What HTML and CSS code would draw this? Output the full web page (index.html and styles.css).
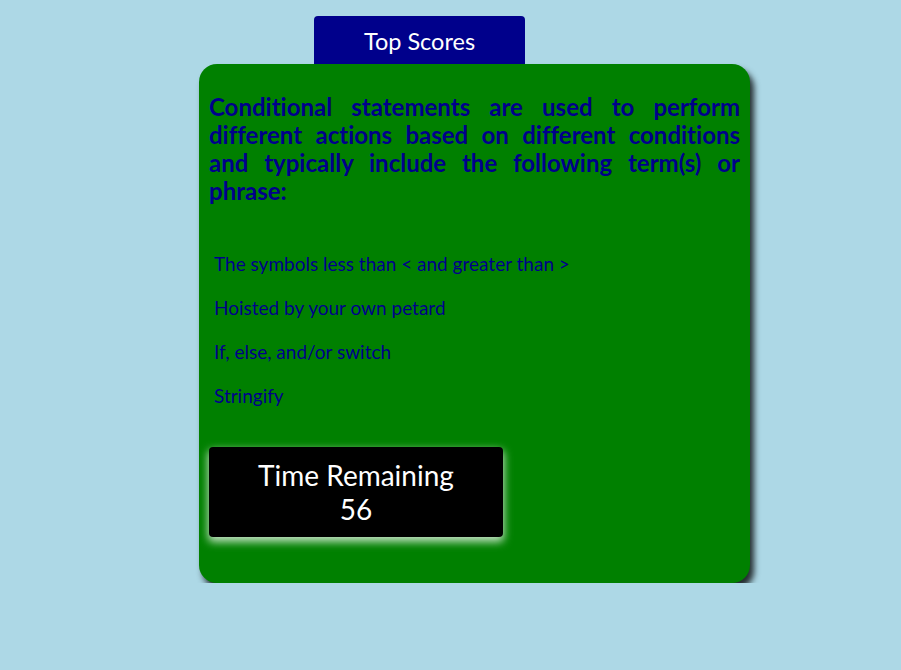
FILE: index.html
```html
<!DOCTYPE html>
<html>
<head>
<meta charset="utf-8">
<link rel="stylesheet" href="styles.css">
</head>
<body>
<div class="page">
  <div class="top-btn">Top Scores</div>
  <div class="card">
    <h2 class="question">Conditional statements are used to perform different actions based on different conditions and typically include the following term(s) or phrase:</h2>
    <div class="answers">
      <div class="answer">The symbols less than &lt; and greater than &gt;</div>
      <div class="answer">Hoisted by your own petard</div>
      <div class="answer">If, else, and/or switch</div>
      <div class="answer">Stringify</div>
    </div>
    <div class="timer">Time Remaining<br>56</div>
  </div>
</div>
</body>
</html>
```
FILE: styles.css
```css
html, body {
  margin: 0;
  padding: 0;
  background: #add8e6;
  font-family: "Lato", "Open Sans", sans-serif;
  font-variant-ligatures: no-common-ligatures;
}
.page {
  padding-top: 16px;
  display: flex;
  flex-direction: column;
  align-items: flex-start;
}
.top-btn {
  margin-left: 314px;
  width: 211px;
  height: 48px;
  box-sizing: border-box;
  background: #00008b;
  color: #fff;
  border-radius: 4px 4px 0 0;
  font-size: 23.5px;
  display: flex;
  align-items: center;
  justify-content: center;
  padding-top: 2px;
}
.card {
  margin-left: 199px;
  width: 551px;
  height: 519px;
  box-sizing: border-box;
  background: #008000;
  border-radius: 18px;
  box-shadow: 4px 6px 6px rgba(0, 0, 0, 0.8);
  padding: 29px 10px 0 10px;
}
.question {
  margin: 0;
  color: #00008b;
  font-size: 24px;
  line-height: 28px;
  font-weight: 700;
  text-align: justify;
}
.answers {
  margin-top: 47px;
  display: flex;
  flex-direction: column;
  gap: 20px;
  padding-left: 5px;
}
.answer {
  color: #00008b;
  font-size: 19px;
  line-height: 24px;
}
.timer {
  margin-top: 39px;
  width: 294px;
  height: 90px;
  box-sizing: border-box;
  background: #000;
  color: #fff;
  border-radius: 4px;
  box-shadow: 0 4px 8px 1px rgba(255, 255, 255, 0.75);
  text-align: center;
  font-size: 28px;
  line-height: 34px;
  padding-top: 11px;
}
```
